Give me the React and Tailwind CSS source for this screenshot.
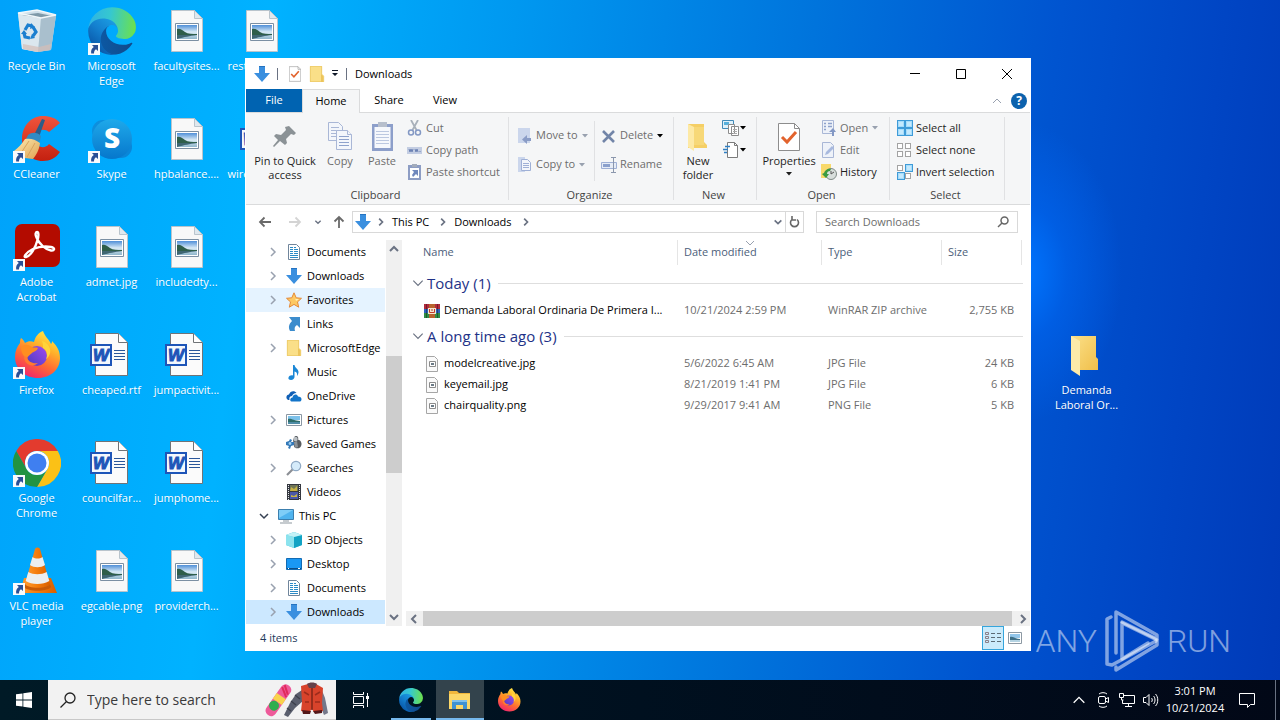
import React from "react";

/* ---------- desktop icons (48x48) ---------- */

function ShortcutBadge() {
    return (
        <svg viewBox="0 0 12 12" className="absolute bottom-0 left-0 size-3">
            <path d="M0 0h12v12H0z" fill="#f8fafc" />
            <path d="M4 2h6v6L8 6.200C6.500 7 6 8.500 6 10.500H3.200C2.800 7.500 3.500 5.500 5.800 4z" fill="#2a4f96" />
        </svg>
    );
}

function RecycleBinIcon() {
    return (
        <svg viewBox="0 0 48 48" className="size-12">
            <path d="M5 6 24 3l19 5-5 35-14 2-15-3z" fill="#cfe0ea" />
            <path d="M5 6l23 5-3 34-16-3z" fill="#dbe7ee" />
            <path d="M28 11 43 8l-5 35-13 2z" fill="#a9bfcd" />
            <path d="M9 8l16-2 14 3-11 2z" fill="#7f99a8" />
            <path d="M5 6 24 3l19 5-15 3z" fill="none" stroke="#f1f7fa" strokeWidth="1.500" />
            <path d="M10 37l16 3 12-3-1 6-13 2-14-3z" fill="#d6bdb6" opacity=".7" />
            <g fill="none" stroke="#1b7fd0" strokeWidth="3.200">
                <path d="M12 23l3-5 4 1" />
                <path d="M20 20l3 5-3 4" />
                <path d="M17 31l-5-1-1-4" />
            </g>
            <path d="M18 16l4 4-5 2zM22 31l-5 1 2-5zM8 27l3-4 3 4z" fill="#1b7fd0" />
        </svg>
    );
}

function EdgeIcon({ className }) {
    return (
        <svg viewBox="4 4 257 257" className={className}>
            <defs>
                <linearGradient id="edgeDark" x1="63" y1="178" x2="241" y2="178" gradientUnits="userSpaceOnUse">
                    <stop offset="0" stopColor="#0c59a4" />
                    <stop offset="1" stopColor="#114a8b" />
                </linearGradient>
                <linearGradient id="edgeMid" x1="157" y1="90" x2="45" y2="220" gradientUnits="userSpaceOnUse">
                    <stop offset="0" stopColor="#1b9de2" />
                    <stop offset=".5" stopColor="#1480cf" />
                    <stop offset="1" stopColor="#0a5cad" />
                </linearGradient>
                <linearGradient id="edgeTop" x1="10" y1="70" x2="255" y2="100" gradientUnits="userSpaceOnUse">
                    <stop offset="0" stopColor="#2fb3e4" />
                    <stop offset=".45" stopColor="#36c8cf" />
                    <stop offset="1" stopColor="#6be04f" />
                </linearGradient>
            </defs>
            <path fill="url(#edgeDark)" d="M235.680 195.460a93.730 93.730 0 0 1-10.540 4.710 101.870 101.870 0 0 1-35.900 6.460c-47.320 0-88.540-32.550-88.540-74.320A31.480 31.480 0 0 1 117.130 105c-42.800 1.800-53.800 46.400-53.800 72.530 0 73.880 68.090 81.370 82.760 81.370 7.910 0 19.840-2.300 27-4.560l1.310-.44a128.340 128.340 0 0 0 66.600-52.800 4 4 0 0 0-5.320-5.640z" />
            <path fill="url(#edgeMid)" d="M110.340 246.340A79.200 79.200 0 0 1 87.600 225a80.720 80.720 0 0 1 29.530-120c3.120-1.470 8.450-4.050 15.540-4a32.350 32.350 0 0 1 25.690 13 31.880 31.880 0 0 1 6.360 18.660c0-.21 24.460-79.600-80-79.600-43.900 0-80 41.660-80 78.210a130.150 130.150 0 0 0 12.110 56 128 128 0 0 0 156.380 67.110 75.550 75.550 0 0 1-62.780-8z" />
            <path fill="url(#edgeTop)" d="M156.940 153.740c-.81 1.050-3.300 2.500-3.300 5.660 0 2.610 1.700 5.120 4.720 7.230 14.380 10 41.490 8.680 41.560 8.680a59.560 59.560 0 0 0 30.270-8.350 61.380 61.380 0 0 0 30.430-52.880c.26-22.410-8-37.310-11.340-43.910C228.090 28.760 182.350 4.930 132.610 4.930a128 128 0 0 0-128 126.200c.48-36.540 36.800-66.050 80-66.050 3.500 0 23.460.34 42 10.070 16.340 8.580 24.900 18.940 30.850 29.210 6.180 10.670 7.280 24.150 7.280 29.520s-2.740 13.330-7.800 19.860z" />
        </svg>
    );
}

function CCleanerIcon() {
    return (
        <svg viewBox="0 0 48 48" className="size-12">
            <defs>
                <linearGradient id="ccRed" x1="0" y1="0" x2="0" y2="1">
                    <stop offset="0" stopColor="#f0543c" />
                    <stop offset="1" stopColor="#c4200f" />
                </linearGradient>
                <linearGradient id="ccBroom" x1="0" y1="0" x2="1" y2="1">
                    <stop offset="0" stopColor="#fdeeb5" />
                    <stop offset="1" stopColor="#e0a04e" />
                </linearGradient>
            </defs>
            <path d="M47 8 36 17c-3-3-9-3-12 0-4 4-4 9 0 13 4 3 9 3 12-1l11 8c-4 6-10 9-17 9C17 46 9 36 9 24 9 11 18 1 30 1c7 0 13 2 17 7z" fill="url(#ccRed)" />
            <path d="M29 4l3 1-6 17-5-2z" fill="#2b5d88" />
            <path d="M15 20c4-3 9-3 13 1l-1 5-5 2-9-4z" fill="#2f8bc4" />
            <path d="M12 24c5-1 10 0 15 4-1 8-4 12-7 16l-8-1L1 36c4-3 8-7 11-12z" fill="url(#ccBroom)" />
            <path d="M16 26l-8 12M22 28l-8 14" stroke="#d8a35c" fill="none" />
        </svg>
    );
}

function SkypeIcon() {
    return (
        <svg viewBox="0 0 48 48" className="size-12">
            <defs>
                <linearGradient id="skypeFill" x1="0" y1="0" x2="0" y2="1">
                    <stop offset="0" stopColor="#1fa9ea" />
                    <stop offset="1" stopColor="#0677cc" />
                </linearGradient>
            </defs>
            <circle cx="15" cy="16" r="11" fill="#0d8fdd" />
            <circle cx="33" cy="32" r="11" fill="#0a86d8" />
            <circle cx="24" cy="24" r="20" fill="url(#skypeFill)" />
            <text x="24" y="33" textAnchor="middle" fontFamily="Open Sans" fontWeight="800" fontSize="28" fill="#fff">S</text>
        </svg>
    );
}

function AcrobatIcon() {
    return (
        <svg viewBox="0 0 48 48" className="size-12">
            <rect x="2" y="1" width="45" height="43" rx="7" fill="#b30b00" />
            <path d="M13 34c-3 1-1-4 7-8 5-2 12-3 18-2 5 1 3 4 0 3.500-6-1-12-7-14.500-13-1.500-3-1-5.500.5-5.500s2 3 .5 8c-2 8-7 16-11.500 17z" fill="none" stroke="#fff" strokeWidth="2.400" strokeLinejoin="round" />
        </svg>
    );
}

function FirefoxIcon({ className }) {
    return (
        <svg viewBox="0 0 48 48" className={className}>
            <defs>
                <linearGradient id="ffBody" x1=".8" y1="0" x2=".3" y2="1">
                    <stop offset="0" stopColor="#fff04a" />
                    <stop offset=".35" stopColor="#ffb02a" />
                    <stop offset=".65" stopColor="#ff6a33" />
                    <stop offset="1" stopColor="#f0246e" />
                </linearGradient>
                <linearGradient id="ffGlobe" x1="1" y1="0" x2="0" y2="1">
                    <stop offset="0" stopColor="#a04af0" />
                    <stop offset="1" stopColor="#4a3cc0" />
                </linearGradient>
            </defs>
            <path d="M30 0c2 6 6 8 8 13 1-1 1-2 1-3 5 5 8 10 8 17 0 11-9 20-22 20S2 38 2 26c0-6 2-10 5-14 0-2 0-3 1-5 2 1 3 3 4 5 3-2 6-2 9-1 1-5 4-9 9-11z" fill="url(#ffBody)" />
            <circle cx="24" cy="25" r="10" fill="url(#ffGlobe)" />
            <path d="M30 17c4 2 5 7 3 11 3-2 5-6 4-10-1-4-4-7-8-8 1 2 1 5 1 7z" fill="#ffd43a" />
            <path d="M8 16c5-4 8-2 11 0 2 1 5 0 6 1-1 3-5 4-6 5-2 2-4 3-5 5-3-1-6-5-6-11z" fill="#ff8e20" />
            <path d="M14 26c1 5 6 7 11 6-5 5-14 2-14-7z" fill="#ff7a30" />
        </svg>
    );
}

function ChromeIcon() {
    return (
        <svg viewBox="0 0 48 48" className="size-12">
            <path d="M24 12h20.800A24 24 0 0 0 3.200 12l10.400 18A12 12 0 0 1 24 12z" fill="#e33b2e" />
            <path d="M44.800 12A24 24 0 0 1 24 48l10.400-18A12 12 0 0 0 24 12z" fill="#fbc116" />
            <path d="M24 48A24 24 0 0 1 3.200 12l10.400 18a12 12 0 0 0 20.800 0z" fill="#229342" />
            <circle cx="24" cy="24" r="12" fill="#fff" />
            <circle cx="24" cy="24" r="9.500" fill="#3f7ff0" />
        </svg>
    );
}

function VlcIcon() {
    return (
        <svg viewBox="0 0 48 48" className="size-12">
            <defs>
                <linearGradient id="vlcOrange" x1="0" y1="0" x2="1" y2="0">
                    <stop offset="0" stopColor="#ff9a2e" />
                    <stop offset=".5" stopColor="#f47b0c" />
                    <stop offset="1" stopColor="#d85f00" />
                </linearGradient>
            </defs>
            <path d="M11 31h27l6 15H7z" fill="url(#vlcOrange)" />
            <path d="M22 2c1-2 4-2 5 0l10 35c-3 5-22 5-25 0z" fill="url(#vlcOrange)" />
            <path d="M19.500 10c3 2 7 2 10 0l2.500 8c-4 3-11 3-15 0zM15.300 25c5 3 13 3 18.400 0l2.600 9c-6 4-18 4-23.600 0z" fill="#eceef0" />
            <path d="M12 37c3 5 22 5 25 0l1 3c-4 5-23 5-27 0z" fill="#c85a08" />
        </svg>
    );
}

function ImageFileIcon() {
    return (
        <svg viewBox="0 0 48 48" className="size-12">
            <defs>
                <linearGradient id="photoSky" x1="0" y1="0" x2="0" y2="1">
                    <stop offset="0" stopColor="#4f8fd8" />
                    <stop offset=".5" stopColor="#d9eaf5" />
                    <stop offset="1" stopColor="#8fb6cb" />
                </linearGradient>
            </defs>
            <path d="M8.500 3.500h23l8 8v33h-31z" fill="#f8f8f8" stroke="#b9c4cc" />
            <path d="M31.500 3.500v8h8z" fill="#dfe8ee" stroke="#b9c4cc" />
            <path d="M12.500 16.500h23v17h-23z" fill="#fff" stroke="#7b8fa3" />
            <path d="M14 18h20v14H14z" fill="url(#photoSky)" />
            <path d="M14 22c3-1 5 1 8 3s7 2 12 2v1H14z" fill="#2f5e4a" />
            <path d="M14 28h20c-8 1-12 2-20 4z" fill="#3f6672" />
        </svg>
    );
}

function WordFileIcon() {
    return (
        <svg viewBox="0 0 48 48" className="size-12">
            <path d="M7.500 2.500h23l9 9v33h-32z" fill="#fbfbfb" stroke="#6f7377" />
            <path d="M30.500 2.500v9h9" fill="#fff" stroke="#6f7377" />
            <path d="M26 19.500h11M26 22.500h11M26 25.500h11M26 28.500h11" stroke="#2b579a" />
            <path d="M2 13h22v22H2z" fill="#1e55b8" />
            <path d="M4 15h18v18H4z" fill="#f4f8fd" />
            <text x="13" y="30" textAnchor="middle" fontFamily="Liberation Sans" fontStyle="italic" fontWeight="700" fontSize="17" fill="#1e55b8" stroke="#1e55b8">W</text>
        </svg>
    );
}

function FolderIcon() {
    return (
        <svg viewBox="0 0 48 48" className="size-12">
            <defs>
                <linearGradient id="folderBack" x1="0" y1="0" x2="1" y2="1">
                    <stop offset="0" stopColor="#fbe089" />
                    <stop offset="1" stopColor="#f0bf4a" />
                </linearGradient>
            </defs>
            <path d="M8 5h25v21l2 2v11H8z" fill="url(#folderBack)" />
            <path d="M8 5l9 5v35l-9-6z" fill="#fdeaa9" />
        </svg>
    );
}

/* ---------- small shell icons ---------- */

function Chevron({ dir, className }) {
    const paths = {
        right: "M5 2l4 4-4 4",
        left: "M8 2L4 6l4 4",
        down: "M2 4l4 4 4-4",
        up: "M2 8l4-4 4 4",
    };
    return (
        <svg viewBox="0 0 12 12" className={className} fill="none" stroke="currentColor">
            <path d={paths[dir]} />
        </svg>
    );
}

function Caret({ className }) {
    return (
        <svg viewBox="0 0 6 4" className={className} fill="currentColor">
            <path d="M0 0h6L3 3.500z" />
        </svg>
    );
}

function DownArrowIcon() {
    return (
        <svg viewBox="0 0 16 16" className="size-4 shrink-0">
            <path d="M5 0h6v7h5l-8 9-8-9h5z" fill="#3a8fdf" />
            <path d="M5 0h6v1H5z" fill="#2573c0" />
        </svg>
    );
}

function SmallFolder() {
    return (
        <svg viewBox="0 0 16 16" className="size-4 shrink-0">
            <path d="M1 0h12v8l2 2v6H1z" fill="#fadf88" />
            <path d="M1.300.3h11.400v8l2 2v5.400H1.300z" fill="none" stroke="#e5bf58" strokeWidth=".6" />
            <path d="M12 8l2 2v6h-2z" fill="#ecc45c" />
        </svg>
    );
}

function DocumentIcon() {
    return (
        <svg viewBox="0 0 16 16" className="size-4 shrink-0">
            <path d="M2.500.5h8l3 3v12h-11z" fill="#fff" stroke="#70859b" />
            <path d="M4 3.500h3M8 3.500h2M4 5.500h3M8 5.500h4M4 7.500h3M8 7.500h4M4 9.500h3M8 9.500h4M4 11.500h8M4 13.500h8" stroke="#2b8ac6" />
        </svg>
    );
}

function StarIcon() {
    return (
        <svg viewBox="0 0 16 16" className="size-4 shrink-0">
            <path d="M8 .8l2.200 5 5.300.5-4 3.600 1.200 5.300L8 12.400l-4.700 2.800 1.200-5.300-4-3.600 5.300-.5z" fill="#fdc963" stroke="#e38a3a" />
            <path d="M8 3l1.200 4H13l-3 2z" fill="#fff0b8" />
        </svg>
    );
}

function LinkIcon() {
    return (
        <svg viewBox="0 0 16 16" className="size-4 shrink-0">
            <path d="M3 1h11v11l-3-3c-2 1-3 3-2 6H4C2 11 3 8 6 5z" fill="#3b8ccd" />
        </svg>
    );
}

function MusicIcon() {
    return (
        <svg viewBox="0 0 16 16" className="size-4 shrink-0">
            <path d="M7 1h1.500c.5 3 4 4 4 7 0 1.500-.7 3-1.500 4 .5-3-.5-4-2.500-4.500V13c0 1.500-1.500 3-3.500 3S2 15 2.500 13.500 5 11 7 11.500z" fill="#1b87d6" />
        </svg>
    );
}

function OneDriveIcon() {
    return (
        <svg viewBox="0 0 16 16" className="size-4 shrink-0">
            <path d="M1 11c-1.500-2 0-4.500 2-4.500C4 3 8.500 2 10.500 5 8 5 6.500 6.500 6 8c-2 0-3 1.500-2.500 4H2z" fill="#0f5eb5" />
            <path d="M5.500 13.500c-2-.5-1.500-4 1-4C7 6 11 5.500 12 8.500c2 0 3.500 1 3.500 2.700s-1 2.300-2 2.300z" fill="#1274c9" />
        </svg>
    );
}

function PictureIcon() {
    return (
        <svg viewBox="0 0 16 16" className="size-4 shrink-0">
            <path d="M.5 2.500h15v11H.5z" fill="#fff" stroke="#8a97a3" />
            <path d="M2 4h12v4H2z" fill="#7cc1ea" />
            <path d="M2 7c3-1 6 2 12 2v3H2z" fill="#2e6d6a" />
            <path d="M2 10h12v2H2z" fill="#4f8ca6" />
        </svg>
    );
}

function GamesIcon() {
    return (
        <svg viewBox="0 0 16 16" className="size-4 shrink-0">
            <path d="M9 0c2-.5 4 1 3 3.500l2 1c2 2 2 5 0 7-2 1.500-5 1-6-1L7 4z" fill="#585c60" />
            <circle cx="9.500" cy="3" r="2.200" fill="#b9bfc4" />
            <path d="M8 6l3-1 1 6-3 1z" fill="#8c9399" />
            <path d="M0 6l3-1 1-2 2 1-1 2 3 0v3l-3 1-1 3-2-1 1-2-3-1z" fill="#3479b8" />
            <circle cx="4" cy="7.500" r="1.400" fill="#9fd0f2" />
        </svg>
    );
}

function SearchesIcon() {
    return (
        <svg viewBox="0 0 16 16" className="size-4 shrink-0">
            <path d="M7 9l-6 6" stroke="#8b8f94" strokeWidth="2.200" />
            <circle cx="10" cy="6" r="4.700" fill="#d5ebfa" stroke="#8fa9c4" strokeWidth="1.200" />
        </svg>
    );
}

function VideosIcon() {
    return (
        <svg viewBox="0 0 16 16" className="size-4 shrink-0">
            <path d="M1 0h14v16H1z" fill="#35383f" />
            <path d="M4 1h8v6H4z" fill="#6f7556" />
            <path d="M4 8h8v7H4z" fill="#4b58a8" />
            <path d="M5 3l3 2 3-3v5H4zM5 11l3 1 3-2v3H5z" fill="#c7b346" />
            <path d="M2.500 1v15M13.500 1v15" stroke="#e4e6ea" strokeDasharray="1 1" />
        </svg>
    );
}

function ThisPcIcon() {
    return (
        <svg viewBox="0 0 16 16" className="size-4 shrink-0">
            <path d="M.5 1.500h15v10H.5z" fill="#4fb3ee" stroke="#3c7fae" />
            <path d="M1 2h14L1 10z" fill="#7fcdf7" />
            <path d="M5 13h6M2 15h12" stroke="#8d979f" />
        </svg>
    );
}

function CubeIcon() {
    return (
        <svg viewBox="0 0 16 16" className="size-4 shrink-0">
            <path d="M0 3l8-3 8 3v10l-8 3-8-3z" fill="#34c1d8" />
            <path d="M0 3l8 2v11l-8-3z" fill="#8ce3ee" />
            <path d="M8 5l8-2v10l-8 3z" fill="#12a3c4" />
            <path d="M0 3l8-3 8 3-8 2z" fill="#c4f2f7" />
        </svg>
    );
}

function DesktopIcon() {
    return (
        <svg viewBox="0 0 16 16" className="size-4 shrink-0">
            <path d="M.5 2.500h15v11H.5z" fill="#1a98f4" stroke="#126bb3" />
            <path d="M1 12h14v1H1z" fill="#0b4c86" />
            <path d="M2 12.500h1M12 12.500h2" stroke="#fff" />
        </svg>
    );
}

function ArchiveIcon() {
    return (
        <svg viewBox="0 0 16 16" className="size-4 shrink-0">
            <path d="M0 1h16v5H0z" fill="#b02a3c" />
            <path d="M0 6h16v4H0z" fill="#2e62bb" />
            <path d="M0 10h16v5H0z" fill="#2f8b45" />
            <path d="M2.500 1v14M13.500 1v14" stroke="#0005" />
            <path d="M5 1h6v14H5z" fill="#b8632e" />
            <path d="M4 5h8v6H4z" fill="#f3e6d0" />
            <path d="M5.500 6v3.500h5V6M8 6v2" stroke="#c23a2a" fill="none" />
        </svg>
    );
}

function JpgIcon() {
    return (
        <svg viewBox="0 0 16 16" className="size-4 shrink-0">
            <path d="M2.500.5h8l3 3v12h-11z" fill="#fafafa" stroke="#a6a6a6" />
            <path d="M5.500 5.500h6v5h-6z" fill="#fff" stroke="#8b8b8b" />
            <path d="M7 7h3v2H7z" fill="#6a7a86" />
        </svg>
    );
}

function CheckPageIcon({ className }) {
    return (
        <svg viewBox="0 0 22 28" className={className}>
            <path d="M.5.500h16l5 5v22H.5z" fill="#fff" stroke="#8d8d8d" />
            <path d="M16.500.500v5h5" fill="none" stroke="#8d8d8d" />
            <path d="M4 14l5 5 9-10" fill="none" stroke="#e2632d" strokeWidth="3" />
        </svg>
    );
}

/* ---------- ribbon icons ---------- */

function PinIcon() {
    return (
        <svg viewBox="0 0 32 32" className="size-8">
            <path d="M20 5l7 7-2 2-3-1-5 5 1 4-2 2-5-4-6 6-1-1 5-6-4-4 2-2 5 1 5-5-1-3z" fill="#8b9296" />
        </svg>
    );
}

function CopyIcon() {
    return (
        <svg viewBox="0 0 32 32" className="size-8" fill="#f3f6fb" stroke="#a9b7d6">
            <path d="M4.500 1.500h10l4 4v14h-14z" />
            <path d="M7 6.500h8M7 9.500h9M7 12.500h9M7 15.500h9" />
            <path d="M12.500 9.500h11l4 4v15h-15z" />
            <path d="M23.500 9.500v4h4" />
            <path d="M15 15.500h10M15 18.500h10M15 21.500h10M15 24.500h10" stroke="#8ea2cc" />
        </svg>
    );
}

function PasteIcon() {
    return (
        <svg viewBox="0 0 32 32" className="size-8">
            <path d="M6 3h21v27H6z" fill="#8d9fca" />
            <path d="M8.500 6h16v21h-16z" fill="#f6f8fc" />
            <path d="M12 1h9v5h-9z" fill="#b7bfcc" />
            <path d="M10 10.500h13M10 13.500h13M10 16.500h13M10 19.500h13M10 22.500h13" stroke="#bcc8e0" />
        </svg>
    );
}

function NewFolderIcon() {
    return (
        <svg viewBox="0 0 32 32" className="size-8">
            <path d="M6 3h16v18l3 3v3H6z" fill="#f5cf65" />
            <path d="M6 3l6 3v24l-6-4z" fill="#fde9a5" />
            <path d="M12 6h10v18h-10z" fill="#f7d878" />
        </svg>
    );
}

function PropertiesIcon() {
    return (
        <span className="flex size-8 items-center justify-center">
            <CheckPageIcon className="h-7 w-[22px]" />
        </span>
    );
}

function CutIcon() {
    return (
        <svg viewBox="0 0 16 16" className="size-4" fill="none">
            <path d="M4 0l5.500 10M11 0L5.500 10" stroke="#a8b0ba" strokeWidth="1.800" />
            <circle cx="4" cy="12.500" r="2.500" stroke="#8398c4" strokeWidth="1.500" />
            <circle cx="11" cy="12.500" r="2.500" stroke="#8398c4" strokeWidth="1.500" />
        </svg>
    );
}

function CopyPathIcon() {
    return (
        <svg viewBox="0 0 16 16" className="size-4">
            <path d="M0 5h15v7H0z" fill="#c3cde2" />
            <path d="M2 7l1 3 1-3 1 3 1-3M8 7l1 3 1-3 1 3" stroke="#6c82b4" fill="none" />
            <path d="M12.500 9.500h1" stroke="#6c82b4" />
        </svg>
    );
}

function PasteShortcutIcon() {
    return (
        <svg viewBox="0 0 16 16" className="size-4">
            <path d="M1 1h13v15H1z" fill="#8d9dc4" />
            <path d="M3 4h9v10H3z" fill="#fff" />
            <path d="M5 0h5v3H5z" fill="#a3acbb" />
            <path d="M5 6h6v6L9 10l-3 3-1-2 2-3z" fill="#7088bd" />
        </svg>
    );
}

function MoveToIcon() {
    return (
        <svg viewBox="0 0 16 16" className="size-4">
            <path d="M1 0h12v15H1z" fill="#cbd6ec" />
            <path d="M14 10h-4V7l-5 4.500 5 4.500v-3h4z" fill="#8a9cc6" />
        </svg>
    );
}

function CopyToIcon() {
    return (
        <svg viewBox="0 0 16 16" className="size-4" fill="#f3f6fb" stroke="#9fb0d6">
            <path d="M1 0h7v15H1z" fill="#cbd6ec" stroke="none" />
            <path d="M4.500 2.500h6l3 3v8h-9z" />
            <path d="M6 6.500h6M6 8.500h6M6 10.500h6" />
        </svg>
    );
}

function DeleteIcon() {
    return (
        <svg viewBox="0 0 16 16" className="size-4">
            <path d="M2 3l11 11M13 3L2 14" stroke="#7285a8" strokeWidth="2.600" />
        </svg>
    );
}

function RenameIcon() {
    return (
        <svg viewBox="0 0 16 16" className="size-4" fill="none">
            <path d="M.5 5.500h15v6H.5z" fill="#e6ecf6" stroke="#9fb0d6" />
            <path d="M2 7h7v3H2z" fill="#8ba0cc" />
            <path d="M12.500 1v14M10 .5h5M10 15.500h5" stroke="#8b97ad" />
        </svg>
    );
}

function NewItemIcon() {
    return (
        <svg viewBox="0 0 18 16" className="h-4 w-[18px]" fill="#fff">
            <path d="M.5.500h11v8H.5z" fill="#dff1fb" stroke="#418ab8" />
            <path d="M2 2h5v3H2z" fill="#56b0dc" />
            <path d="M6.500 4.500h6v9h-6zM9.500 6.500h7v9h-7z" stroke="#8c8c8c" />
            <path d="M11 9.500h4M11 11.500h4M11 13.500h4" stroke="#a9a9a9" />
        </svg>
    );
}

function EasyAccessIcon() {
    return (
        <svg viewBox="0 0 18 16" className="h-4 w-[18px]" fill="#fff">
            <path d="M5.500.500h7l3 3v12h-10z" stroke="#7b7b7b" />
            <path d="M12.500.500v3h3" fill="none" stroke="#7b7b7b" />
            <path d="M3 4.500h5M1 7.500h5M2 10.500h3" stroke="#2f7fc4" strokeWidth="1.500" />
        </svg>
    );
}

function OpenIcon() {
    return (
        <svg viewBox="0 0 16 16" className="size-4" fill="none">
            <path d="M1.500.5h11v13h-11z" fill="#eef2f9" stroke="#a9b7d6" />
            <path d="M3 3.500h2M3 6.500h2M3 9.500h2M7 3.500h4M7 6.500h4" stroke="#8ea2cc" strokeWidth="1.500" />
            <path d="M11 16v-4H8l4-4 3 4h-2v4z" fill="#8398c4" />
        </svg>
    );
}

function EditIcon() {
    return (
        <svg viewBox="0 0 16 16" className="size-4" fill="none">
            <path d="M1.500.5h8l3 3v12h-11z" fill="#eef2f9" stroke="#a9b7d6" />
            <path d="M4 13l1-3 6-6 2 2-6 6z" fill="#a8b9de" />
        </svg>
    );
}

function HistoryIcon() {
    return (
        <svg viewBox="0 0 16 16" className="size-4">
            <path d="M0 0h10v5l2 2v7H0z" fill="#f8d96b" />
            <circle cx="10" cy="10" r="5.500" fill="#d8dedc" stroke="#7f8a86" />
            <path d="M10 7v3l3-2" stroke="#555" fill="none" />
            <path d="M3 9c1-3 4-5 7-4L9 7C7 7 6 8 6 10h2l-3 4-4-4z" fill="#3c9b41" />
        </svg>
    );
}

const tileSpots = [
    [1, 0],
    [9, 0],
    [1, 8],
    [9, 8],
];

function TilesIcon({ filled }) {
    return (
        <svg viewBox="0 0 17 16" className="h-4 w-[17px]">
            {tileSpots.map(([x, y], i) =>
                filled[i] ? (
                    <g key={i}>
                        <rect x={x + 0.5} y={y + 0.5} width="7" height="7" fill="#a6dcfa" stroke="#3f9bd8" />
                        <rect x={x + 2} y={y + 2} width="4" height="4" fill="#c5e9fd" />
                    </g>
                ) : (
                    <rect key={i} x={x + 0.5} y={y + 1.5} width="5" height="5" fill="#fff" stroke="#a3a3a3" />
                )
            )}
        </svg>
    );
}

/* ---------- desktop ---------- */

const desktopItems = [
    { label: "Recycle Bin", icon: <RecycleBinIcon /> },
    { label: "CCleaner", icon: <CCleanerIcon />, shortcut: true },
    { label: "Adobe Acrobat", icon: <AcrobatIcon />, shortcut: true },
    { label: "Firefox", icon: <FirefoxIcon className="size-12" />, shortcut: true },
    { label: "Google Chrome", icon: <ChromeIcon />, shortcut: true },
    { label: "VLC media player", icon: <VlcIcon />, shortcut: true },
    { label: "Microsoft Edge", icon: <EdgeIcon className="size-12" />, shortcut: true },
    { label: "Skype", icon: <SkypeIcon />, shortcut: true },
    { label: "admet.jpg", icon: <ImageFileIcon /> },
    { label: "cheaped.rtf", icon: <WordFileIcon /> },
    { label: "councilfar...", icon: <WordFileIcon /> },
    { label: "egcable.png", icon: <ImageFileIcon /> },
    { label: "facultysites...", icon: <ImageFileIcon /> },
    { label: "hpbalance....", icon: <ImageFileIcon /> },
    { label: "includedty...", icon: <ImageFileIcon /> },
    { label: "jumpactivit...", icon: <WordFileIcon /> },
    { label: "jumphome...", icon: <WordFileIcon /> },
    { label: "providerch...", icon: <ImageFileIcon /> },
    { label: "restaurants...", icon: <ImageFileIcon /> },
    { label: "wirelesspro...", icon: <WordFileIcon /> },
    { label: "Demanda Laboral Or...", icon: <FolderIcon />, place: "col-start-15 row-start-4" },
];

function DesktopItem({ item }) {
    return (
        <button className={`flex flex-col gap-[3px] pt-[7px] text-white ${item.place || ""}`}>
            <span className="relative ml-[13px] size-12">
                {item.icon}
                {item.shortcut && <ShortcutBadge />}
            </span>
            <span className="w-full pr-1 pl-[2px] text-center leading-[15px] text-shadow-2xs">{item.label}</span>
        </button>
    );
}

function Watermark() {
    return (
        <div className="absolute right-[49px] bottom-2 flex items-center gap-2 text-[32px] leading-none font-light text-white/50">
            <span className="font-['Roboto',sans-serif]">ANY</span>
            <svg viewBox="0 0 54 62" className="h-[62px] w-[54px]" fill="none" stroke="currentColor" strokeWidth="3.500" strokeLinejoin="round" strokeLinecap="round">
                <path d="M11 43V2l41 23v4L17 12" />
                <path d="M6 7L2 9v45l5 1 44-24" />
                <path d="M11 57v3l41-25v-5L17 13v36l26-16" />
            </svg>
            <span className="font-['Roboto',sans-serif]">RUN</span>
        </div>
    );
}

/* ---------- explorer window ---------- */

function TitleBar() {
    return (
        <div className="flex h-[30px] shrink-0 items-center pl-2">
            <DownArrowIcon />
            <span className="ml-[7px] h-3 w-px bg-gray-500" />
            <button aria-label="Properties" className="ml-[11px]">
                <CheckPageIcon className="h-4 w-3" />
            </button>
            <button aria-label="New folder" className="ml-2">
                <SmallFolder />
            </button>
            <button aria-label="Customize Quick Access Toolbar" className="ml-[6px] text-gray-900">
                <svg viewBox="0 0 8 8" className="size-2" fill="currentColor">
                    <path d="M1 0h6v1H1zM1 3h6L4 6z" />
                </svg>
            </button>
            <span className="ml-[7px] h-3 w-px bg-gray-500" />
            <span className="ml-2">Downloads</span>
            <div className="ml-auto flex self-stretch">
                <button aria-label="Minimize" className="flex w-[46px] items-center justify-center">
                    <svg viewBox="0 0 10 10" className="size-[10px]" stroke="#000">
                        <path d="M0 4.500h10" />
                    </svg>
                </button>
                <button aria-label="Maximize" className="flex w-[46px] items-center justify-center">
                    <svg viewBox="0 0 10 10" className="size-[10px]" stroke="#000" fill="none">
                        <path d="M.5.500h9v9h-9z" />
                    </svg>
                </button>
                <button aria-label="Close" className="flex w-[46px] items-center justify-center">
                    <svg viewBox="0 0 10 10" className="size-[10px]" stroke="#000">
                        <path d="M0 0l10 10M10 0L0 10" />
                    </svg>
                </button>
            </div>
        </div>
    );
}

function Tabs() {
    return (
        <div className="flex h-[23px] shrink-0 items-stretch">
            <button className="w-14 bg-[#0063b1] text-white">File</button>
            <button className="z-10 -mb-px w-[58px] border border-b-0 border-[#dadbdc] bg-[#f5f6f7]">Home</button>
            <button className="w-[58px]">Share</button>
            <button className="w-[54px]">View</button>
            <div className="ml-auto flex items-center gap-2 pr-[3px]">
                <button aria-label="Minimize the Ribbon">
                    <Chevron dir="up" className="size-3 text-gray-400" />
                </button>
                <button aria-label="Help">
                    <svg viewBox="0 0 16 16" className="size-4">
                        <circle cx="8" cy="8" r="8" fill="#0c62ad" />
                        <text x="8" y="12" textAnchor="middle" fontFamily="Open Sans" fontWeight="700" fontSize="12" fill="#fff">?</text>
                    </svg>
                </button>
            </div>
        </div>
    );
}

function BigButton({ icon, label, disabled, caret, className }) {
    return (
        <button
            disabled={disabled}
            className={`flex flex-col items-center pt-2 leading-[14px] disabled:text-[#6d6d6d] ${className}`}
        >
            {icon}
            <span className="mt-px">{label}</span>
            {caret && <Caret className="mt-1 h-1 w-[6px]" />}
        </button>
    );
}

function SmallButton({ icon, label, disabled, caret, className }) {
    return (
        <button
            disabled={disabled}
            aria-label={label ? undefined : "New item"}
            className={`flex items-center whitespace-nowrap disabled:text-[#6d6d6d] ${className}`}
        >
            {icon}
            {label && <span className="mr-1 ml-[3px]">{label}</span>}
            {caret && <Caret className={`h-1 w-[6px] ${caret}`} />}
        </button>
    );
}

function RibbonGroup({ name, className, children }) {
    return (
        <div className={`relative flex flex-col ${className}`}>
            <div className="flex flex-1">{children}</div>
            <div className="h-[18px] pr-1 text-center leading-[18px] text-[#444]">{name}</div>
            <span className="absolute inset-y-1 right-0 w-px bg-[#e0e1e3]" />
        </div>
    );
}

function Ribbon() {
    return (
        <div className="flex h-[93px] shrink-0 border-y border-[#dadbdc] bg-[#f5f6f7] text-[#1e1e1e]">
            <RibbonGroup name="Clipboard" className="w-[263px]">
                <BigButton className="ml-1 w-[70px]" icon={<PinIcon />} label={<>Pin to Quick<br />access</>} />
                <BigButton className="w-10" icon={<CopyIcon />} label="Copy" disabled />
                <BigButton className="w-11" icon={<PasteIcon />} label="Paste" disabled />
                <div className="ml-[3px] pt-1">
                    <SmallButton className="h-[22px]" icon={<CutIcon />} label="Cut" disabled />
                    <SmallButton className="h-[22px]" icon={<CopyPathIcon />} label="Copy path" disabled />
                    <SmallButton className="h-[22px]" icon={<PasteShortcutIcon />} label="Paste shortcut" disabled />
                </div>
            </RibbonGroup>
            <RibbonGroup name="Organize" className="w-[165px]">
                <div className="w-[77px] pt-2 pl-2">
                    <SmallButton className="h-[29px]" icon={<MoveToIcon />} label="Move to" disabled caret="text-gray-400" />
                    <SmallButton className="h-[29px]" icon={<CopyToIcon />} label="Copy to" disabled caret="text-gray-400" />
                </div>
                <span className="mt-2 ml-2 h-[60px] w-px bg-[#e0e1e3]" />
                <div className="pt-2 pl-[6px]">
                    <SmallButton className="h-[29px]" icon={<DeleteIcon />} label="Delete" disabled caret="text-black" />
                    <SmallButton className="h-[29px]" icon={<RenameIcon />} label="Rename" disabled />
                </div>
            </RibbonGroup>
            <RibbonGroup name="New" className="w-[83px]">
                <BigButton className="w-12" icon={<NewFolderIcon />} label={<>New<br />folder</>} />
                <div className="pt-1">
                    <SmallButton className="h-[22px]" icon={<NewItemIcon />} caret="text-black" />
                    <SmallButton className="h-[22px]" icon={<EasyAccessIcon />} caret="text-black" />
                </div>
            </RibbonGroup>
            <RibbonGroup name="Open" className="w-[133px]">
                <BigButton className="w-16" icon={<PropertiesIcon />} label="Properties" caret />
                <div className="pt-1">
                    <SmallButton className="h-[22px]" icon={<OpenIcon />} label="Open" disabled caret="text-gray-400" />
                    <SmallButton className="h-[22px]" icon={<EditIcon />} label="Edit" disabled />
                    <SmallButton className="h-[22px]" icon={<HistoryIcon />} label="History" />
                </div>
            </RibbonGroup>
            <RibbonGroup name="Select" className="w-[115px]">
                <div className="pt-1 pl-[6px]">
                    <SmallButton className="h-[22px]" icon={<TilesIcon filled={[1, 1, 1, 1]} />} label="Select all" />
                    <SmallButton className="h-[22px]" icon={<TilesIcon filled={[0, 0, 0, 0]} />} label="Select none" />
                    <SmallButton className="h-[22px]" icon={<TilesIcon filled={[0, 1, 1, 0]} />} label="Invert selection" />
                </div>
            </RibbonGroup>
        </div>
    );
}

function AddressBar() {
    return (
        <div className="flex h-[35px] shrink-0 items-center px-3 pb-px">
            <button aria-label="Back">
                <svg viewBox="0 0 14 14" className="size-[14px]" fill="none" stroke="#6a6a6a" strokeWidth="1.800">
                    <path d="M13 7H2M6.500 2.500L2 7l4.500 4.500" />
                </svg>
            </button>
            <button aria-label="Forward" className="ml-4">
                <svg viewBox="0 0 14 14" className="size-[14px]" fill="none" stroke="#d4d4d4" strokeWidth="1.800">
                    <path d="M1 7h11M7.500 2.500L12 7l-4.500 4.500" />
                </svg>
            </button>
            <button aria-label="Recent locations" className="ml-3">
                <Chevron dir="down" className="size-2 stroke-2 text-gray-500" />
            </button>
            <button aria-label="Up" className="ml-[10px]">
                <svg viewBox="0 0 14 14" className="size-[14px]" fill="none" stroke="#6a6a6a" strokeWidth="1.800">
                    <path d="M7 13V2M2.500 6.500L7 2l4.500 4.500" />
                </svg>
            </button>
            <nav aria-label="Address" className="ml-[6px] flex h-[22px] flex-1 items-center border border-[#d9d9d9] pl-[2px]">
                <DownArrowIcon />
                <Chevron dir="right" className="ml-1 size-[10px] stroke-2 text-gray-500" />
                <a href="#this-pc" className="ml-[7px]">This PC</a>
                <Chevron dir="right" className="ml-2 size-[10px] stroke-2 text-gray-500" />
                <a href="#downloads" className="ml-[7px]">Downloads</a>
                <Chevron dir="right" className="ml-2 size-[10px] stroke-2 text-gray-500" />
                <button aria-label="Previous locations" className="mr-[2px] ml-auto">
                    <Chevron dir="down" className="size-[10px] stroke-2 text-gray-500" />
                </button>
                <button aria-label="Refresh" className="flex w-[18px] items-center justify-center self-stretch border-l border-[#d9d9d9]">
                    <svg viewBox="0 0 12 12" className="size-3" fill="none" stroke="#666" strokeWidth="1.600">
                        <path d="M3 3.500a4 4 0 1 0 5 0M3 0v4h4" />
                    </svg>
                </button>
            </nav>
            <div className="ml-3 flex h-[22px] w-[202px] items-center border border-[#d9d9d9] px-2">
                <input
                    type="text"
                    aria-label="Search Downloads"
                    placeholder="Search Downloads"
                    className="min-w-0 flex-1 outline-none placeholder:text-[#6d6d6d]"
                />
                <svg viewBox="0 0 12 12" className="size-3" fill="none" stroke="#666" strokeWidth="1.500">
                    <circle cx="7.500" cy="4.500" r="3.500" />
                    <path d="M5 7l-4 4" />
                </svg>
            </div>
        </div>
    );
}

const treeItems = [
    { label: "Documents", icon: <DocumentIcon />, expand: true },
    { label: "Downloads", icon: <DownArrowIcon />, expand: true },
    { label: "Favorites", icon: <StarIcon />, expand: true, state: "bg-[#e5f3ff]" },
    { label: "Links", icon: <LinkIcon /> },
    { label: "MicrosoftEdge", icon: <SmallFolder />, expand: true },
    { label: "Music", icon: <MusicIcon /> },
    { label: "OneDrive", icon: <OneDriveIcon /> },
    { label: "Pictures", icon: <PictureIcon />, expand: true },
    { label: "Saved Games", icon: <GamesIcon /> },
    { label: "Searches", icon: <SearchesIcon />, expand: true },
    { label: "Videos", icon: <VideosIcon /> },
    { label: "This PC", icon: <ThisPcIcon />, root: true },
    { label: "3D Objects", icon: <CubeIcon />, expand: true },
    { label: "Desktop", icon: <DesktopIcon />, expand: true },
    { label: "Documents", icon: <DocumentIcon />, expand: true },
    { label: "Downloads", icon: <DownArrowIcon />, expand: true, state: "bg-[#cce8ff]" },
];

function NavTree() {
    return (
        <div className="flex w-[156px] shrink-0">
            <ul className="flex-1 overflow-hidden">
                {treeItems.map((item, i) => (
                    <li key={i} className={item.state}>
                        <button
                            className={`flex h-6 w-full items-center whitespace-nowrap ${item.root ? "pl-3" : "pl-5"}`}
                        >
                            <span className="flex w-5 shrink-0">
                                {item.expand && <Chevron dir="right" className="size-3 stroke-[1.5px] text-gray-400" />}
                                {item.root && <Chevron dir="down" className="size-3 stroke-[1.5px] text-gray-700" />}
                            </span>
                            {item.icon}
                            <span className="ml-[5px]">{item.label}</span>
                        </button>
                    </li>
                ))}
            </ul>
            <div className="ml-px flex w-4 flex-col items-center bg-[#f0f0f0]">
                <Chevron dir="up" className="my-[3px] size-3 shrink-0 stroke-2 text-gray-500" />
                <div className="flex w-full flex-1 flex-col">
                    <div className="flex-98" />
                    <div className="flex-117 bg-[#cdcdcd]" />
                    <div className="flex-135" />
                </div>
                <Chevron dir="down" className="my-[3px] size-3 shrink-0 stroke-2 text-gray-500" />
            </div>
        </div>
    );
}

const fileGroups = [
    {
        title: "Today (1)",
        files: [
            {
                name: "Demanda Laboral Ordinaria De Primera I...",
                date: "10/21/2024 2:59 PM",
                type: "WinRAR ZIP archive",
                size: "2,755 KB",
                icon: <ArchiveIcon />,
            },
        ],
    },
    {
        title: "A long time ago (3)",
        files: [
            { name: "modelcreative.jpg", date: "5/6/2022 6:45 AM", type: "JPG File", size: "24 KB", icon: <JpgIcon /> },
            { name: "keyemail.jpg", date: "8/21/2019 1:41 PM", type: "JPG File", size: "6 KB", icon: <JpgIcon /> },
            { name: "chairquality.png", date: "9/29/2017 9:41 AM", type: "PNG File", size: "5 KB", icon: <JpgIcon /> },
        ],
    },
];

function FileList() {
    return (
        <div className="flex min-w-0 flex-1 flex-col">
            <div className="flex-1 overflow-hidden">
                <table className="w-full table-fixed border-separate border-spacing-0 text-left text-[#6d6d6d]">
                    <colgroup>
                        <col className="w-[276px]" />
                        <col className="w-36" />
                        <col className="w-[120px]" />
                        <col className="w-20" />
                        <col />
                    </colgroup>
                    <thead className="text-[#4c607a]">
                        <tr className="h-[25px]">
                            <th className="border-r border-[#e5e5e5] p-0 pl-[21px] font-normal">Name</th>
                            <th className="relative border-r border-[#e5e5e5] p-0 pl-[6px] font-normal">
                                Date modified
                                <Chevron dir="down" className="absolute -top-[3px] left-[66px] size-3 text-gray-400" />
                            </th>
                            <th className="border-r border-[#e5e5e5] p-0 pl-[6px] font-normal">Type</th>
                            <th className="border-r border-[#e5e5e5] p-0 pl-[6px] font-normal">Size</th>
                            <td />
                        </tr>
                    </thead>
                    {fileGroups.map((group, g) => (
                        <tbody key={group.title}>
                            <tr>
                                <th colSpan={5} className={`p-0 font-normal ${g === 0 ? "pt-[3px]" : ""}`}>
                                    <div className="flex h-8 items-center pr-[7px] pb-[2px] pl-[9px]">
                                        <Chevron dir="down" className="size-[14px] text-gray-500" />
                                        <span className="ml-[2px] text-[15px] text-[#1e3287]">{group.title}</span>
                                        <span className="ml-[7px] h-px flex-1 bg-[#dedede]" />
                                    </div>
                                </th>
                            </tr>
                            {group.files.map((file) => (
                                <tr key={file.name} className="h-[21px] whitespace-nowrap">
                                    <td className="p-0 pl-[22px] text-black">
                                        <div className="flex items-center gap-1">
                                            {file.icon}
                                            {file.name}
                                        </div>
                                    </td>
                                    <td className="p-0 pl-[6px]">{file.date}</td>
                                    <td className="p-0 pl-[6px]">{file.type}</td>
                                    <td className="p-0 pr-2 text-right">{file.size}</td>
                                    <td />
                                </tr>
                            ))}
                        </tbody>
                    ))}
                </table>
            </div>
            <div className="ml-1 flex h-[15px] items-center bg-[#f0f0f0] px-[2px]">
                <Chevron dir="left" className="mr-[3px] size-3 stroke-2 text-gray-500" />
                <div className="flex-1 self-stretch bg-[#cdcdcd]" />
                <Chevron dir="right" className="ml-1 size-3 stroke-2 text-gray-500" />
            </div>
        </div>
    );
}

function StatusBar() {
    return (
        <div className="flex h-6 shrink-0 items-center pr-1 pl-[14px] text-[#1e395b]">
            <span>4 items</span>
            <button aria-label="Details view" className="ml-auto flex h-6 w-[22px] items-center justify-center border border-[#35a5dc] bg-[#cbebfb]">
                <svg viewBox="0 0 16 12" className="h-3 w-4" fill="none" stroke="#5c6b75">
                    <path d="M.5.500h3v2h-3zM.5 4.500h3v2h-3zM.5 8.500h3v2h-3z" stroke="#8a7f88" />
                    <path d="M6 1.500h4M12 1.500h4M6 5.500h4M12 5.500h4M6 9.500h4M12 9.500h4" />
                </svg>
            </button>
            <button aria-label="Large icons view" className="flex w-[22px] justify-center">
                <svg viewBox="0 0 14 12" className="h-3 w-[14px]">
                    <path d="M.5.500h13v11H.5z" fill="#fff" stroke="#8d99a3" />
                    <path d="M2 2h10v4H2z" fill="#93c6ea" />
                    <path d="M2 5c3-1 5 2 10 2v3H2z" fill="#3f6f86" />
                    <path d="M2 8h10v2H2z" fill="#b4d3e2" />
                </svg>
            </button>
        </div>
    );
}

function ExplorerWindow() {
    return (
        <section
            aria-label="Downloads"
            className="absolute top-[58px] right-[249px] bottom-[29px] left-[245px] flex flex-col border border-white bg-white text-black"
        >
            <TitleBar />
            <Tabs />
            <Ribbon />
            <AddressBar />
            <div className="flex min-h-0 flex-1">
                <NavTree />
                <FileList />
            </div>
            <StatusBar />
        </section>
    );
}

/* ---------- taskbar ---------- */

function SearchArt() {
    return (
        <svg viewBox="0 0 64 36" className="h-9 w-16">
            <g transform="rotate(35 14 18)">
                <rect x="9" y="0" width="11" height="36" rx="5" fill="#ee5a9a" />
                <path d="M9 13h11v7H9z" fill="#f9d34c" />
                <path d="M10 5l9 6M11 2l8 6" stroke="#e02a5c" strokeWidth="2" />
                <circle cx="14" cy="25" r="5" fill="#2fae4e" />
            </g>
            <path d="M38 8l-6 4-6 9-6 12 4 2 7-9 8-7z" fill="#5a5f6e" />
            <path d="M31 13l5 4M27 19l5 4M23 26l4 3" stroke="#3d414d" strokeWidth="1.500" />
            <path d="M57 6l4 10 3 15-4 2-5-12z" fill="#74788a" />
            <path d="M37 4l7-2h8l7 4-1 15 1 8-9 1-2-3-3 3-8-1 1-9z" fill="#d8432b" />
            <path d="M43 2c2-2 8-2 10 0l-2 4h-6z" fill="#66424a" />
            <path d="M48 6v22" stroke="#7f2418" strokeWidth="1.500" />
            <path d="M38 28l9 1-1 3h-7zM49 29l9-1v3l-7 1z" fill="#54181a" />
            <path d="M40 10l5 3M56 10l-5 3M41 20h4M51 20h5" stroke="#9d2c1c" strokeWidth="1.500" />
        </svg>
    );
}

function Taskbar() {
    return (
        <footer className="flex h-10 shrink-0 bg-linear-to-r from-[#001a26] via-[#00101f] to-[#020817] text-white">
            <button aria-label="Start" className="flex w-12 items-center justify-center">
                <svg viewBox="0 0 16 16" className="size-4" fill="#fff">
                    <path d="M0 2.300l6.500-.9v6.200H0zM7.300 1.300L16 0v7.600H7.300zM0 8.400h6.500v6.200L0 13.700zM7.300 8.400H16V16l-8.700-1.300z" />
                </svg>
            </button>
            <div className="flex w-72 items-center border-b border-[#c8c8c8] bg-[#f2f2f2] pr-2 pl-3 text-[#2b2b2b]">
                <svg viewBox="0 0 16 16" className="size-4" fill="none" stroke="#222" strokeWidth="1.300">
                    <circle cx="10" cy="6" r="5" />
                    <path d="M6.500 9.500L.5 15.500" />
                </svg>
                <input
                    type="text"
                    aria-label="Type here to search"
                    placeholder="Type here to search"
                    className="ml-[11px] min-w-0 flex-1 text-[14px] outline-none placeholder:text-[#3a3a3a]"
                />
                <SearchArt />
            </div>
            <div className="flex gap-px">
                <button aria-label="Task View" className="flex w-[50px] items-center justify-center">
                    <svg viewBox="0 0 16 16" className="size-4" fill="none" stroke="#fff">
                        <path d="M.5 0v2.500h10V0M.5 16v-2.500h10V16M.5 4.500h10v7H.5zM14.500 1v14" />
                        <path d="M13 4h3v3h-3z" fill="#fff" stroke="none" />
                    </svg>
                </button>
                <button aria-label="Microsoft Edge" className="relative flex w-12 items-center justify-center">
                    <EdgeIcon className="size-6" />
                    <span className="absolute inset-x-1 bottom-0 h-[2px] bg-[#76b9ed]" />
                </button>
                <button aria-label="File Explorer" className="relative flex w-12 items-center justify-center bg-[#33434c]">
                    <svg viewBox="0 0 24 24" className="size-6">
                        <path d="M1 3h8l2 2h11v16H1z" fill="#f0b73c" />
                        <path d="M1 6h21v15H1z" fill="#fbd768" />
                        <path d="M4 12h15v9h-4v-4H8v4H4z" fill="#3f92d2" />
                        <path d="M4 12h15v2H4z" fill="#7fc0ec" />
                    </svg>
                    <span className="absolute inset-x-0 bottom-0 h-[2px] bg-[#76b9ed]" />
                </button>
                <button aria-label="Firefox" className="flex w-12 items-center justify-center">
                    <FirefoxIcon className="size-6" />
                </button>
            </div>
            <div className="ml-auto flex items-center">
                <button aria-label="Show hidden icons" className="flex w-6 justify-center">
                    <Chevron dir="up" className="size-4" />
                </button>
                <button aria-label="Meet Now" className="flex w-6 justify-center">
                    <svg viewBox="0 0 16 16" className="size-4" fill="none" stroke="#fff">
                        <path d="M4 2c2-1.800 6-1.800 8 0M4 14c2 1.800 6 1.800 8 0" />
                        <rect x="3.500" y="4.500" width="7" height="7" rx="1.500" />
                        <path d="M10.500 7l3-1.500v5l-3-1.500" />
                    </svg>
                </button>
                <button aria-label="Network" className="flex w-6 justify-center">
                    <svg viewBox="0 0 16 16" className="size-4" fill="none" stroke="#fff">
                        <path d="M5 3.500h10.500v8h-12V8M9.500 11.500v3M6 14.500h7" />
                        <path d="M.5 1.500h4v4h-4zM2.500 5.500V8h2" />
                    </svg>
                </button>
                <button aria-label="Volume" className="flex w-6 justify-center">
                    <svg viewBox="0 0 16 16" className="size-4" fill="none" stroke="#fff">
                        <path d="M.5 5.500H3l3-3v11l-3-3H.5zM8.500 6c1 1 1 3 0 4M10.500 4c2 2 2 6 0 8M12.500 2c3 3 3 9 0 12" />
                    </svg>
                </button>
                <button className="w-16 pb-[2px] text-center leading-[17px]">
                    3:01 PM
                    <br />
                    10/21/2024
                </button>
                <button aria-label="Notifications" className="flex w-10 justify-center">
                    <svg viewBox="0 0 16 16" className="size-4" fill="none" stroke="#fff">
                        <path d="M.5 1.500h15v11h-4l-3 3v-3h-8z" />
                    </svg>
                </button>
                <button aria-label="Show desktop" className="ml-2 w-[5px] self-stretch border-l border-gray-500" />
            </div>
        </footer>
    );
}

export default function App() {
    return (
        <div className="flex h-screen flex-col overflow-hidden font-['Open_Sans','Noto_Sans',sans-serif] text-[11px]">
            <main className="relative min-h-0 flex-1 overflow-hidden bg-[radial-gradient(100px_150px_at_1022px_272px,#0075ff,#0068f588_45%,transparent),linear-gradient(97deg,#00a2fa_0%,#00b2ff_20%,#0098f0_38%,#0074dc_60%,#0054d0_78%,#0045c4_90%,#003ab8_100%)]">
                <div className="grid grid-flow-col auto-cols-[75px] grid-rows-[repeat(6,108px)] items-start">
                    {desktopItems.map((item) => (
                        <DesktopItem key={item.label} item={item} />
                    ))}
                </div>
                <Watermark />
                <ExplorerWindow />
            </main>
            <Taskbar />
        </div>
    );
}
